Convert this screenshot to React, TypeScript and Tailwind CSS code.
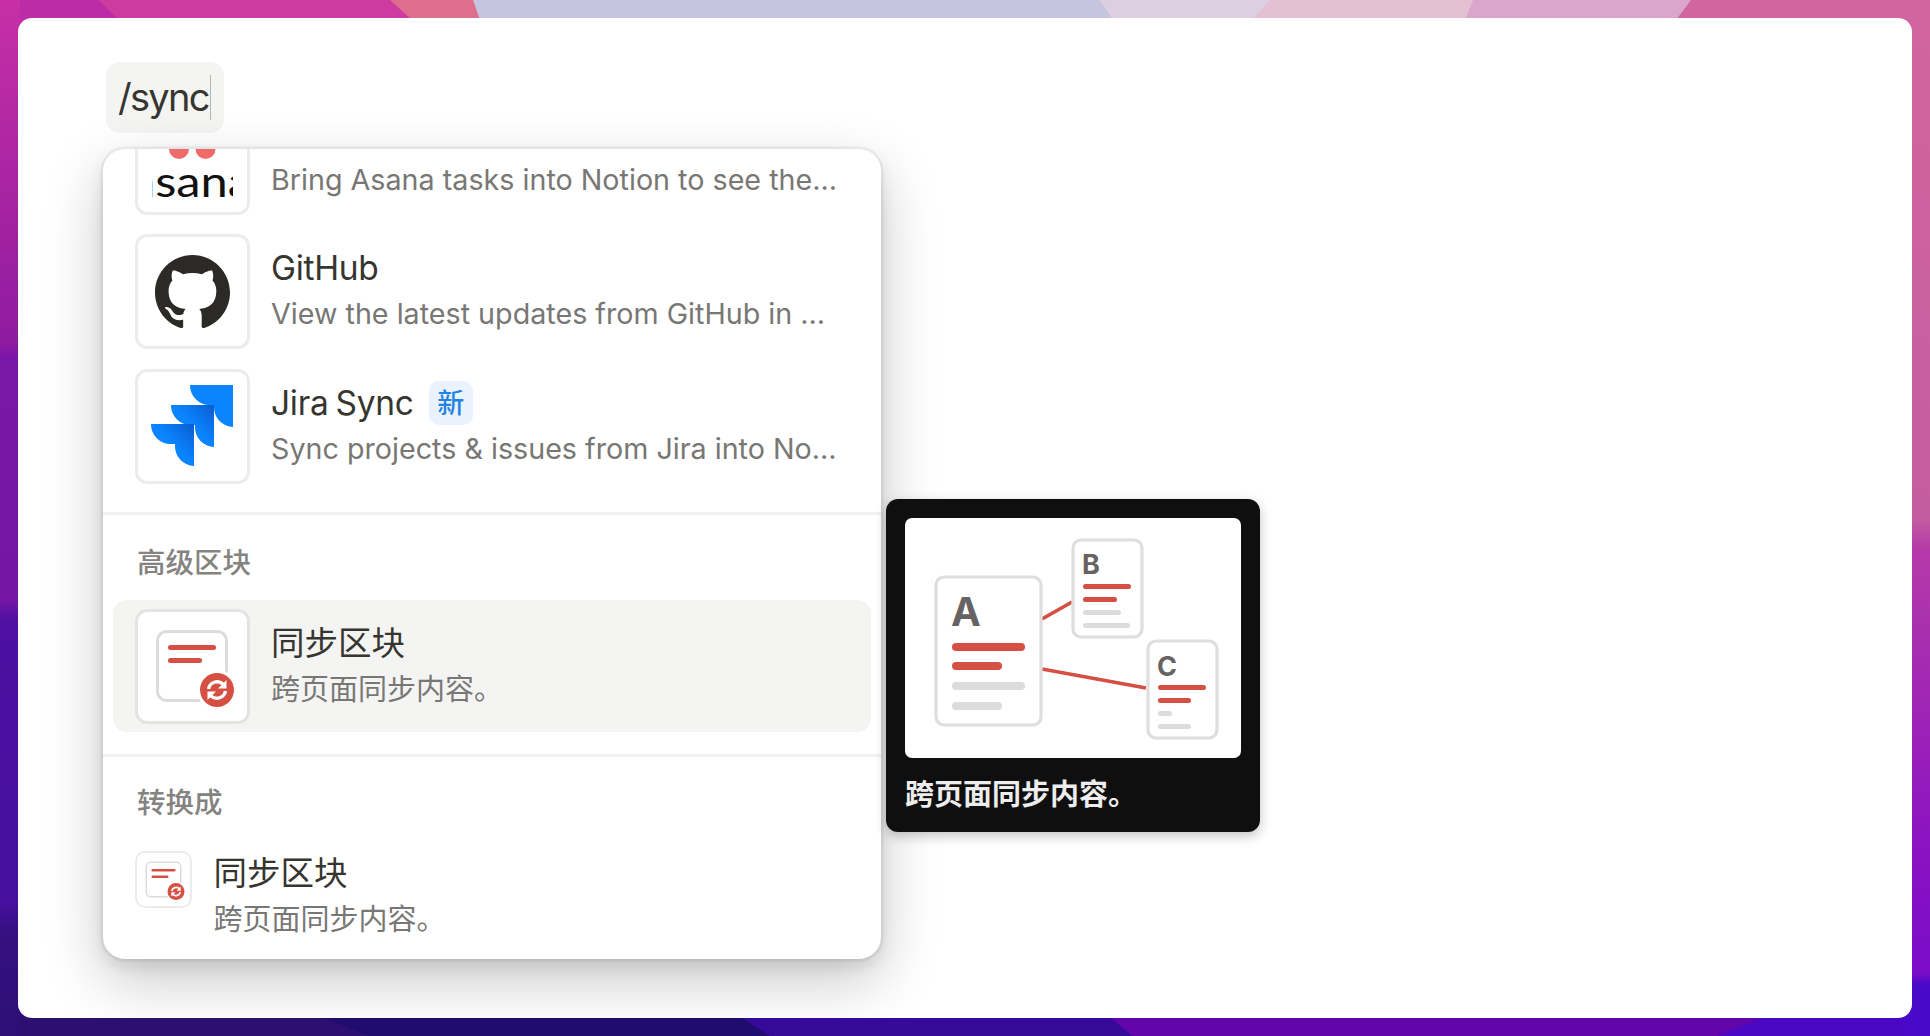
import { SiGithub } from "react-icons/si";

const Wallpaper = () => (
  <svg className="absolute inset-0" width="1930" height="1036" viewBox="0 0 1930 1036">
    <defs>
      <linearGradient id="wall-left" x1="0" y1="0" x2="0" y2="1">
        <stop offset="0" stopColor="#c72fa6" />
        <stop offset="0.33" stopColor="#8f1ba0" />
        <stop offset="0.345" stopColor="#7a17a8" />
        <stop offset="0.58" stopColor="#7416a6" />
        <stop offset="0.6" stopColor="#4d10a2" />
        <stop offset="0.87" stopColor="#470f9e" />
        <stop offset="0.9" stopColor="#351080" />
        <stop offset="1" stopColor="#2d0f76" />
      </linearGradient>
      <linearGradient id="wall-right" x1="0" y1="0" x2="0" y2="1">
        <stop offset="0" stopColor="#d2659f" />
        <stop offset="0.5" stopColor="#c45d9f" />
        <stop offset="0.53" stopColor="#b63aa8" />
        <stop offset="0.82" stopColor="#8a12c2" />
        <stop offset="0.94" stopColor="#7a0cc8" />
        <stop offset="0.95" stopColor="#4a08c8" />
        <stop offset="1" stopColor="#4a08c8" />
      </linearGradient>
    </defs>
    <rect x="0" y="0" width="30" height="1036" fill="url(#wall-left)" />
    <rect x="1900" y="0" width="30" height="1036" fill="url(#wall-right)" />

    {/* bands are painted left to right, each one running under the next */}
    <polygon points="20,0 1905,0 1905,20 20,20" fill="#bd2ca8" />
    <polygon points="98,0 1905,0 1905,20 119,20" fill="#cd3aa0" />
    <polygon points="390,0 1905,0 1905,20 412,20" fill="#dd6f8c" />
    <polygon points="473,0 1905,0 1905,20 480,20" fill="#c5c5e0" />
    <polygon points="1100,0 1905,0 1905,20 1113,20" fill="#dccfe2" />
    <polygon points="1270,0 1905,0 1905,20 1252,20" fill="#e4c0d2" />
    <polygon points="1473,0 1905,0 1905,20 1465,20" fill="#dba6cb" />
    <polygon points="1691,0 1905,0 1905,20 1676,20" fill="#d2659f" />

    <polygon points="20,1016 1905,1016 1905,1036 20,1036" fill="#2c0f70" />
    <polygon points="320,1016 1905,1016 1905,1036 369,1036" fill="#1f0c6e" />
    <polygon points="739,1016 1905,1016 1905,1036 770,1036" fill="#350a99" />
    <polygon points="1108,1016 1905,1016 1905,1036 1133,1036" fill="#6205aa" />
    <polygon points="1767,1016 1905,1016 1905,1036 1717,1036" fill="#4a08c4" />
  </svg>
);

const AsanaIcon = () => (
  <svg width="109" height="109" viewBox="3 3 109 109" className="overflow-hidden">
    <circle cx="44" cy="49" r="10" fill="#f06a6a" />
    <circle cx="70.5" cy="49" r="10" fill="#f06a6a" />
    <clipPath id="asana-clip">
      <rect x="17" y="60" width="81" height="50" />
    </clipPath>
    <g clipPath="url(#asana-clip)">
      <text x="-4" y="97" fontFamily="Lato, sans-serif" fontSize="42" fontWeight="400" fill="#111" textLength="121" lengthAdjust="spacingAndGlyphs">
        asana
      </text>
    </g>
  </svg>
);

const JiraIcon = () => {
  const piece = "M0 0H43V42A19.5 19.5 0 0 1 24 22.5V20H19.5A19.5 19.5 0 0 1 0 0Z";
  return (
    <svg width="109" height="109" viewBox="3 3 109 109">
      <defs>
        <linearGradient id="jira-a" x1="43" y1="0" x2="22" y2="20" gradientUnits="userSpaceOnUse">
          <stop offset="0" stopColor="#0b5ccf" />
          <stop offset="1" stopColor="#0a84ff" />
        </linearGradient>
      </defs>
      <path d={piece} transform="translate(55 16)" fill="#0a84ff" />
      <path d={piece} transform="translate(36 36)" fill="url(#jira-a)" />
      <path d={piece} transform="translate(16 55)" fill="url(#jira-a)" />
    </svg>
  );
};

const SyncArrows = () => (
  <>
    <path d="M73.5 80A8.8 8.8 0 0 1 88 75" fill="none" stroke="#fff" strokeWidth="3.4" />
    <path d="M91.5 71V79.5H83Z" fill="#fff" />
  </>
);

// same drawing at both sizes, only the svg box differs
const SyncBlockIcon = ({ small }: { small?: boolean }) => (
  <svg width={small ? 53 : 109} height={small ? 53 : 109} viewBox={small ? "4 4 106 106" : "3 3 109 109"}>
    <rect x="22.5" y="22.5" width="69" height="69" rx="9" fill="#fff" stroke="#dcdcdb" strokeWidth="3" />
    <rect x="33" y="36" width="48" height="5" rx="2.5" fill="#d64f43" />
    <rect x="33" y="49" width="34" height="5" rx="2.5" fill="#d64f43" />
    <circle cx="82" cy="81" r="20" fill="#fff" />
    <circle cx="82" cy="81" r="17" fill="#d64f43" />
    <SyncArrows />
    <g transform="rotate(180 82 81)">
      <SyncArrows />
    </g>
  </svg>
);

const IconBox = ({ selected, children }: { selected?: boolean; children: React.ReactNode }) => (
  <div
    className={`flex h-[115px] w-[115px] shrink-0 items-center justify-center overflow-hidden rounded-[12px] border-[3px] bg-white ${
      selected ? "border-[#e3e3e2]" : "border-[#ececeb]"
    }`}
  >
    {children}
  </div>
);

const RowText = ({ title, desc, badge, cjk, className = "" }: {
  title: string;
  desc: string;
  badge?: boolean;
  cjk?: boolean;
  className?: string;
}) => (
  <div className={`ml-[21.5px] flex min-w-0 flex-col ${className}`}>
    <div className={`flex h-[44px] items-center whitespace-nowrap pb-[5px] text-[33.5px] leading-[39px] text-[#37352f] ${cjk ? "" : "tracking-[-0.3px] [word-spacing:-2px]"}`}>
      {title}
      {badge && (
        <span className="ml-[15px] flex h-[44px] w-[44px] shrink-0 items-center justify-center rounded-[10px] bg-[#eaf3fd] text-[27px] font-medium text-[#2383e2]">
          新
        </span>
      )}
    </div>
    <div className={`h-[40px] whitespace-nowrap leading-[40px] text-[#787774] ${cjk ? "mt-[2px] text-[29px]" : "mt-[1px] text-[28.7px]"}`}>
      {desc}
    </div>
  </div>
);

const SyncDoc = ({ x, y, w, h, letter, size, base, lines }: {
  x: number;
  y: number;
  w: number;
  h: number;
  letter: string;
  size: number;
  base: number;
  lines: { x: number; y: number; w: number; h: number; red?: boolean }[];
}) => (
  <g>
    <rect x={x} y={y} width={w} height={h} rx="8" fill="#fff" stroke="#dedede" strokeWidth="3.2" />
    <text x={lines[0].x - 1} y={base} fontFamily="Inter, sans-serif" fontWeight="700" fontSize={size} fill="#686363">
      {letter}
    </text>
    {lines.map((l) => (
      <rect key={l.y} x={l.x} y={l.y} width={l.w} height={l.h} rx={l.h / 2} fill={l.red ? "#d64f43" : "#dcdcdc"} />
    ))}
  </g>
);

const Preview = () => (
  <svg width="336" height="240" viewBox="0 0 336 240" className="block rounded-[7px] bg-white">
    <line x1="137" y1="101" x2="167" y2="84" stroke="#d64f43" strokeWidth="3.6" />
    <line x1="137" y1="151" x2="241" y2="170" stroke="#d64f43" strokeWidth="3.6" />
    <SyncDoc
      x={31}
      y={59}
      w={105}
      h={148}
      letter="A"
      size={40}
      base={108}
      lines={[
        { x: 47, y: 125, w: 73, h: 8, red: true },
        { x: 47, y: 144, w: 50, h: 8, red: true },
        { x: 47, y: 164, w: 73, h: 8 },
        { x: 47, y: 184, w: 50, h: 8 },
      ]}
    />
    <SyncDoc
      x={168}
      y={22}
      w={69}
      h={97}
      letter="B"
      size={27}
      base={56}
      lines={[
        { x: 178, y: 66, w: 48, h: 5, red: true },
        { x: 178, y: 79, w: 34, h: 5, red: true },
        { x: 178, y: 92, w: 38, h: 5 },
        { x: 178, y: 105, w: 47, h: 5 },
      ]}
    />
    <SyncDoc
      x={243}
      y={123}
      w={69}
      h={97}
      letter="C"
      size={27}
      base={158}
      lines={[
        { x: 253, y: 167, w: 48, h: 5, red: true },
        { x: 253, y: 180, w: 33, h: 5, red: true },
        { x: 253, y: 193, w: 14, h: 5 },
        { x: 253, y: 206, w: 33, h: 5 },
      ]}
    />
  </svg>
);

export default function App() {
  return (
    <div className="relative h-[1036px] w-[1930px] overflow-hidden p-[18px] font-[Inter,'Noto_Sans_CJK_SC',sans-serif]">
      <Wallpaper />
      <div className="relative h-full overflow-hidden rounded-[14px] bg-white">
        {/* slash command being typed */}
        <div className="ml-[88px] mt-[44px] flex h-[71px] w-[118px] items-center rounded-[14px] bg-[#f4f4f3] pl-[12px] text-[38px] tracking-[-1.7px] text-[#37352f]">
          /sync
          <span className="ml-[1px] h-[45px] w-[1.5px] bg-[#b5b5b3]" />
        </div>

        {/* command menu, scrolled so the first row is cut off */}
        <div className="ml-[85px] mt-[16px] h-[810px] w-[778px] overflow-hidden rounded-[22px] bg-white shadow-[0_0_0_2.5px_rgba(15,15,15,0.05),0_7px_15px_rgba(15,15,15,0.1),0_22px_59px_rgba(15,15,15,0.22)]">
          <div className="-mt-[59px]">
            <div className="flex h-[134.5px] items-center pl-[31.5px]">
              <IconBox>
                <AsanaIcon />
              </IconBox>
              <RowText title="Asana" desc="Bring Asana tasks into Notion to see the…" />
            </div>
            <div className="flex h-[134.5px] items-center pl-[31.5px]">
              <IconBox>
                <SiGithub size={75} color="#2b2a26" />
              </IconBox>
              <RowText title="GitHub" desc="View the latest updates from GitHub in …" />
            </div>
            <div className="flex h-[134.5px] items-center pl-[31.5px]">
              <IconBox>
                <JiraIcon />
              </IconBox>
              <RowText title="Jira Sync" badge desc="Sync projects & issues from Jira into No…" />
            </div>
          </div>

          <div className="mt-[18px] h-[3px] bg-[#f1f1ef]" />
          <div className="h-[85px] pl-[34px] pt-[30px] text-[28.5px] font-medium leading-[35px] text-[#84837f]">高级区块</div>
          <div className="mx-[10px] flex h-[132px] items-start rounded-[14px] bg-[#f4f4f3] pl-[21.5px] pt-[9.5px]">
            <IconBox selected>
              <SyncBlockIcon />
            </IconBox>
            <RowText title="同步区块" cjk className="mt-[15px]" desc="跨页面同步内容。" />
          </div>

          <div className="mt-[22px] h-[3px] bg-[#f1f1ef]" />
          <div className="h-[94px] pl-[34px] pt-[28px] text-[28.5px] font-medium leading-[35px] text-[#84837f]">转换成</div>
          <div className="flex items-start pl-[32px]">
            <div className="flex h-[57px] w-[57px] shrink-0 items-center justify-center overflow-hidden rounded-[10px] border-2 border-[#ececeb] bg-white">
              <SyncBlockIcon small />
            </div>
            <RowText title="同步区块" cjk className="mt-[3px]" desc="跨页面同步内容。" />
          </div>
        </div>

        {/* hover preview beside the selected row */}
        <div className="absolute left-[868px] top-[481px] h-[333px] w-[374px] rounded-[12px] bg-[#0f0f0f] p-[19px] shadow-[0_4px_12px_rgba(15,15,15,0.25)]">
          <Preview />
          <div className="mt-[19px] text-[29px] font-semibold leading-[35px] text-[#ededed]">跨页面同步内容。</div>
        </div>
      </div>
    </div>
  );
}
